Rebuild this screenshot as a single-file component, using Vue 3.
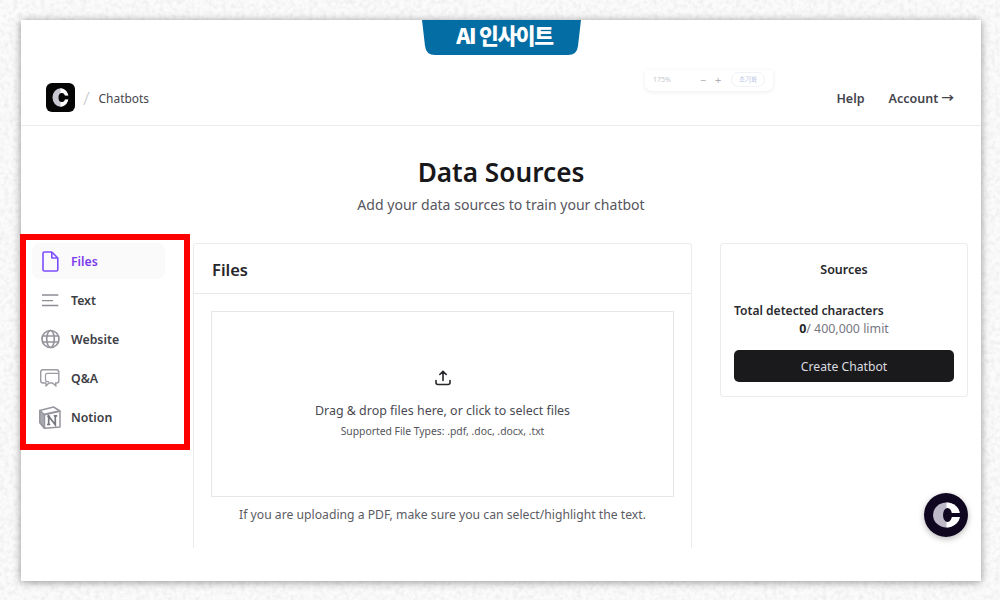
<script setup>
const sideItems = [
  { key: 'files', label: 'Files', active: true },
  { key: 'text', label: 'Text' },
  { key: 'website', label: 'Website' },
  { key: 'qa', label: 'Q&A' },
  { key: 'notion', label: 'Notion' },
]
</script>

<template>
  <div class="page">
    <svg class="paper" width="1000" height="600" aria-hidden="true">
      <filter id="paperGrain" x="0" y="0" width="100%" height="100%">
        <feTurbulence type="fractalNoise" baseFrequency="0.22" numOctaves="3" seed="4" />
        <feColorMatrix type="matrix" values="0 0 0 0 0.55  0 0 0 0 0.55  0 0 0 0 0.55  0.55 0 0 0 -0.22" />
      </filter>
      <rect width="1000" height="600" fill="#fbfbfb" />
      <rect width="1000" height="600" filter="url(#paperGrain)" />
    </svg>

    <div class="sheet">
      <div class="badge"><span>AI 인사이트</span></div>

      <div class="zoom-pill">
        <span class="zoom-value">175%</span>
        <span class="zoom-op">−</span>
        <span class="zoom-op">+</span>
        <span class="zoom-reset">초기화</span>
      </div>

      <header class="topbar">
        <div class="crumbs">
          <svg class="logo" width="29" height="29" viewBox="0 0 29 29">
            <rect width="29" height="29" rx="6" fill="#050505" />
            <ellipse cx="14.5" cy="14.5" rx="8" ry="9.2" fill="#c9c6d2" />
            <path d="M14.5 5.3A8 9.2 0 0 1 14.500 23.700Z" fill="#fff" />
            <ellipse cx="15.800" cy="14.500" rx="3.300" ry="4.500" fill="#050505" />
            <rect x="15.800" y="12.600" width="8" height="3.800" fill="#050505" />
          </svg>
          <span class="slash">/</span>
          <span class="crumb">Chatbots</span>
        </div>
        <nav class="topnav">
          <span>Help</span>
          <span>Account →</span>
        </nav>
      </header>

      <section class="intro">
        <h1>Data Sources</h1>
        <p>Add your data sources to train your chatbot</p>
      </section>

      <main class="workspace">
        <aside class="side">
          <div v-for="item in sideItems" :key="item.key" class="side-item" :class="{ active: item.active }">
            <span class="side-icon">
              <svg v-if="item.key === 'files'" width="24" height="24" viewBox="0 0 24 24" fill="none" stroke="#7c4dff" stroke-width="1.600" stroke-linejoin="round">
                <path d="M4 4.300A1.300 1.300 0 0 1 5.300 3H12.800L18.800 9V20.700A1.300 1.300 0 0 1 17.500 22H5.300A1.300 1.300 0 0 1 4 20.700Z" />
                <path d="M12.800 3V9H18.800" />
              </svg>
              <svg v-else-if="item.key === 'text'" width="24" height="24" viewBox="0 0 24 24" fill="none" stroke="#8d8d96" stroke-width="1.300">
                <path d="M3 7H19.300M3 12.700H14M3 17.500H19.300" />
              </svg>
              <svg v-else-if="item.key === 'website'" width="24" height="24" viewBox="0 0 24 24" fill="none" stroke="#94949c" stroke-width="1.700">
                <circle cx="11.500" cy="12" r="8.500" />
                <ellipse cx="11.500" cy="12" rx="3.800" ry="8.500" />
                <path d="M3.500 9H19.500M3.500 15H19.500" />
              </svg>
              <svg v-else-if="item.key === 'qa'" width="24" height="24" viewBox="0 0 24 24" fill="none" stroke="#9b9ba2" stroke-width="1.400" stroke-linejoin="round">
                <path d="M7 17H4C2.500 17 1.700 16 1.700 14.700V6C1.700 4.500 2.700 3.700 4 3.700H17.500C19 3.700 19.800 4.500 19.800 6V15C19.800 16.300 19 17 17.500 17H16.500L17 20 13.500 17H10L7 20Z" />
                <path d="M8.500 7.300H19.800M6.500 9.300C6.500 8 7.200 7.300 8.500 7.300M6.500 9.300V13.500C6.500 14.800 7.200 15.600 8.500 15.600H10" stroke-width="1.200" />
              </svg>
              <svg v-else width="24" height="24" viewBox="0 0 24 24">
                <path d="M.800 5.500 14.500 2 21 6V22L5.500 23.300.800 17.500Z" fill="#fff" stroke="#96969e" stroke-width="1.500" stroke-linejoin="round" />
                <path d="M.800 5.500 5.500 9.500V23.300L.800 17.500Z" fill="#a9a9b0" stroke="#96969e" stroke-width="1.500" stroke-linejoin="round" />
                <path d="M5.500 9.500 21 6" fill="none" stroke="#96969e" stroke-width="2" />
                <path d="M9.700 19.500V11.300L16.300 19.800V10.800M8.200 11.300H11.200M8 19.500H11.300M14.800 10.800H18.200" fill="none" stroke="#77777f" stroke-width="1.700" />
              </svg>
            </span>
            <span class="side-label">{{ item.label }}</span>
          </div>
          <div class="highlight"></div>
        </aside>

        <section class="panel">
          <h2 class="panel-head">Files</h2>
          <div class="panel-body">
            <div class="dropzone">
              <svg width="20" height="20" viewBox="0 0 20 20" fill="none" stroke="#26262b" stroke-width="1.600" stroke-linecap="round" stroke-linejoin="round">
                <path d="M10 12.500V3.500M6.800 6.500 10 3.300 13.200 6.500" />
                <path d="M3 12.500V14.500C3 15.800 3.800 16.500 5 16.500H15C16.200 16.500 17 15.800 17 14.500V12.500" />
              </svg>
              <p class="drop-title">Drag &amp; drop files here, or click to select files</p>
              <p class="drop-types">Supported File Types: .pdf, .doc, .docx, .txt</p>
            </div>
            <p class="hint">If you are uploading a PDF, make sure you can select/highlight the text.</p>
          </div>
        </section>

        <section class="summary">
          <h3>Sources</h3>
          <p class="total">Total detected characters</p>
          <p class="limit"><b>0</b>/ 400,000 limit</p>
          <button type="button" class="create">Create Chatbot</button>
        </section>
      </main>

      <div class="fab">
        <svg width="44" height="44" viewBox="0 0 44 44">
          <circle cx="22" cy="22" r="22" fill="#0f0720" />
          <ellipse cx="22.500" cy="22" rx="13.500" ry="12.500" fill="#bdb9c9" />
          <path d="M22.500 9.500A13.500 12.500 0 0 1 22.500 34.500Z" fill="#fff" />
          <ellipse cx="23.500" cy="22" rx="4.500" ry="7" fill="#0f0720" />
          <rect x="23.500" y="20" width="14" height="4" fill="#0f0720" />
        </svg>
      </div>
    </div>
  </div>
</template>

<style>
html, body { margin: 0; padding: 0; background: #f8f8f8; }
</style>

<style scoped>
* { box-sizing: border-box; }
.page {
  position: relative;
  width: 1000px;
  height: 600px;
  padding: 20px 19px 19px 21px;
  overflow: hidden;
  font-family: "Noto Sans", "Noto Sans CJK KR", sans-serif;
  color: #1d1d20;
}
.paper { position: absolute; left: 0; top: 0; }
.sheet {
  position: relative;
  height: 561px;
  background: #fff;
  box-shadow: 0 1px 8px rgba(0, 0, 0, .42);
}
.badge {
  position: absolute;
  left: 401px;
  top: 0;
  width: 159px;
  height: 35px;
  background: #046da3;
  clip-path: path("M0 0H159L156 26Q155 35 146 35H13Q4 35 3 26Z");
  display: flex;
  align-items: center;
  justify-content: center;
  padding: 0 0 7px 6px;
}
.badge span {
  font-family: "Noto Sans CJK KR", "Noto Sans", sans-serif;
  font-weight: 900;
  font-size: 21.500px;
  letter-spacing: -1.300px;
  white-space: nowrap;
  color: #fff;
}
.zoom-pill {
  position: absolute;
  left: 624px;
  top: 50px;
  width: 128px;
  height: 21px;
  padding: 0 8px 2px;
  display: flex;
  align-items: center;
  gap: 7px;
  border-radius: 0 0 7px 7px;
  box-shadow: 0 1px 4px rgba(60, 70, 110, .1);
  color: #c4c6cc;
  font-size: 7px;
}
.zoom-value { width: 40px; }
.zoom-op { width: 8px; text-align: center; font-size: 11px; color: #b0b0b4; }
.zoom-reset {
  flex: none;
  width: 34px;
  height: 15px;
  margin-left: 2px;
  border: 1px solid #f0f2f8;
  border-radius: 8px;
  text-align: center;
  white-space: nowrap;
  line-height: 13px;
  color: #b9c6e6;
  font-size: 6.500px;
}
.topbar {
  height: 106px;
  padding: 63px 27px 0 25px;
  display: flex;
  justify-content: space-between;
  border-bottom: 1px solid #ececee;
}
.crumbs { display: flex; align-items: flex-start; }
.logo { display: block; }
.slash {
  margin: 2px 0 0 8px;
  font-size: 19px;
  line-height: 26px;
  font-weight: 300;
  color: #c8c8cc;
}
.crumb {
  margin: 5px 0 0 9px;
  font-size: 11.900px;
  line-height: 20px;
  color: #45454d;
}
.topnav {
  display: flex;
  gap: 24px;
  padding-top: 6px;
  font-size: 12.500px;
  line-height: 20px;
  font-weight: 600;
  color: #44444c;
}
.intro { height: 117px; padding-top: 27px; text-align: center; }
.intro h1 {
  margin: 0;
  font-size: 26.200px;
  line-height: 38px;
  font-weight: 600;
  color: #18181b;
}
.intro p {
  margin: 4px 0 0;
  font-size: 14.050px;
  line-height: 20px;
  color: #56565e;
}
.workspace {
  position: relative;
  display: flex;
  align-items: flex-start;
  padding-left: 11px;
}
.side { width: 161px; flex: none; }
.side-item {
  width: 133px;
  height: 36px;
  margin-bottom: 3px;
  padding-left: 7px;
  display: flex;
  align-items: center;
  gap: 8px;
  border-radius: 8px;
}
.side-item.active { background: #fafafa; }
.side-icon { width: 24px; height: 24px; flex: none; }
.side-icon svg { display: block; }
.side-label {
  font-size: 12.300px;
  font-weight: 600;
  color: #3d3d45;
}
.active .side-label { color: #7c3aed; }
.highlight {
  position: absolute;
  left: -1px;
  top: -9px;
  width: 170px;
  height: 216px;
  border: 6px solid #fe0000;
  pointer-events: none;
}
.panel {
  width: 499px;
  height: 305px;
  flex: none;
  border: 1px solid #ececee;
  border-bottom: 0;
  border-radius: 3px 3px 0 0;
}
.panel-head {
  height: 50px;
  margin: 0;
  padding-left: 18px;
  border-bottom: 1px solid #e8e8ea;
  font-size: 16.500px;
  line-height: 51px;
  font-weight: 600;
  color: #26262b;
}
.panel-body { padding: 17px 17px 0; }
.dropzone {
  height: 186px;
  padding-top: 56px;
  display: flex;
  flex-direction: column;
  align-items: center;
  border: 1px solid #e6e6e8;
}
.drop-title {
  margin: 14px 0 0;
  font-size: 12.450px;
  line-height: 18px;
  color: #4a4a52;
}
.drop-types {
  margin: 4px 0 0;
  font-size: 10.350px;
  line-height: 14px;
  color: #55555c;
}
.hint {
  margin: 9px 0 0;
  text-align: center;
  font-size: 12.200px;
  line-height: 18px;
  color: #5c5c64;
}
.summary {
  width: 248px;
  height: 154px;
  margin-left: 28px;
  padding: 0 13px;
  flex: none;
  border: 1px solid #ececee;
  border-radius: 3px;
}
.summary h3 {
  margin: 0;
  padding-top: 17px;
  text-align: center;
  font-size: 12.500px;
  line-height: 18px;
  font-weight: 600;
  color: #26262b;
}
.total {
  margin: 23px 0 0;
  font-size: 12.100px;
  line-height: 18px;
  font-weight: 600;
  color: #2b2b30;
}
.limit {
  margin: 0;
  text-align: center;
  font-size: 12.400px;
  line-height: 18px;
  color: #77777f;
}
.limit b { color: #26262b; font-weight: 700; }
.create {
  display: block;
  width: 220px;
  height: 32px;
  margin-top: 12px;
  border: 0;
  border-radius: 5px;
  background: #1a1a1c;
  color: #dcdce0;
  font: 400 12.200px "Noto Sans", sans-serif;
}
.fab {
  position: absolute;
  left: 903px;
  top: 473px;
  width: 44px;
  height: 44px;
  border-radius: 50%;
  box-shadow: 0 2px 6px rgba(0, 0, 0, .28);
}
.fab svg { display: block; }
</style>
